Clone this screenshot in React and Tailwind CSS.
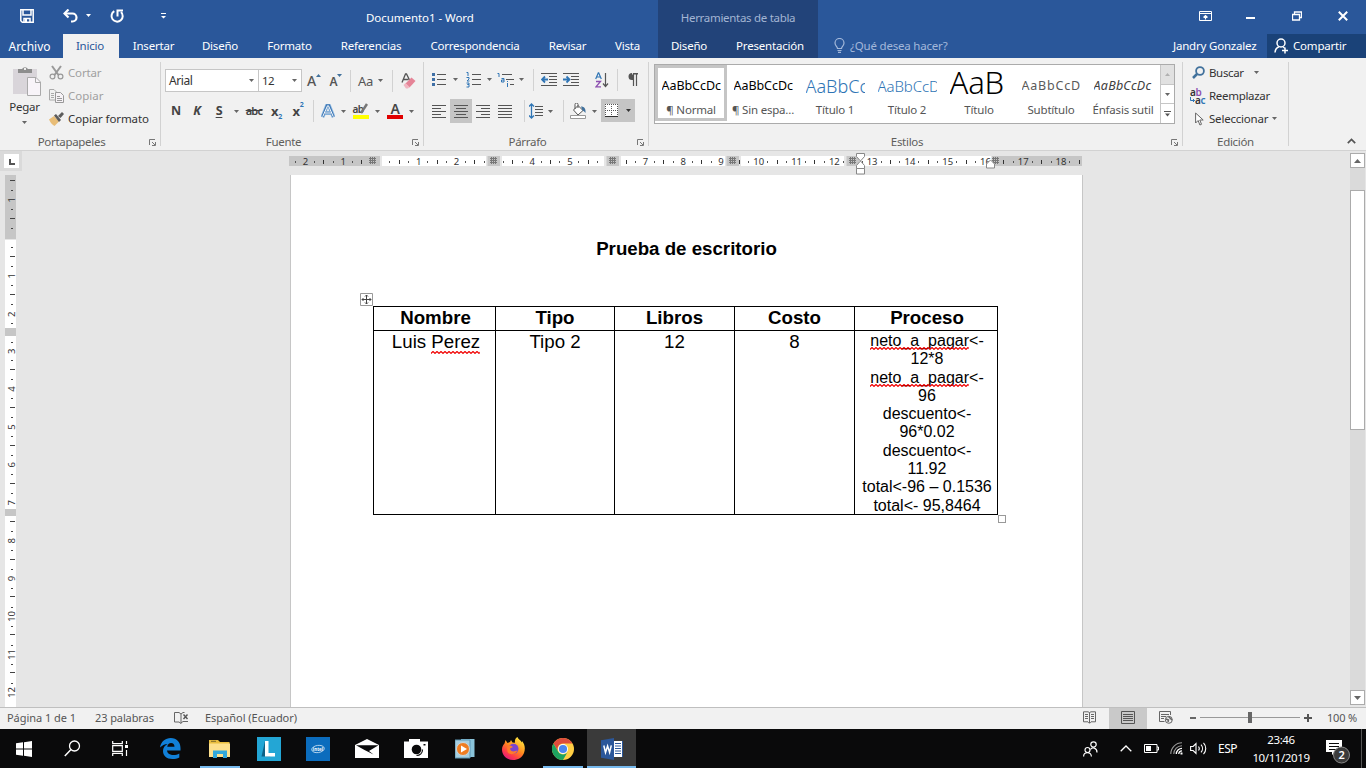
import React from "react";

/* ---------- helpers ---------- */

function Cell({ className = "", children }) {
  return <div className={"flex h-full shrink-0 items-center justify-center " + className}>{children}</div>;
}

function Svg({ w, h, children, className = "" }) {
  return (
    <svg width={w} height={h} viewBox={`0 0 ${w} ${h}`} fill="none" className={"shrink-0 " + className}>
      {children}
    </svg>
  );
}

function Caret({ color = "#666" }) {
  return (
    <Svg w={5} h={3}>
      <path d="M0 0h5L2.5 3z" fill={color} />
    </Svg>
  );
}

function Sep() {
  return <div className="h-[22px] w-px shrink-0 bg-[#d2d2d2]" />;
}

function Group({ className, label, launcher, children }) {
  return (
    <section className={"flex h-[92px] shrink-0 flex-col " + className}>
      <div className="flex h-[76px] flex-col">{children}</div>
      <div className="flex h-[16px] items-center tracking-[-0.3px] text-[#605e5c]">
        <span className="flex-1 text-center">{label}</span>
        {launcher && (
          <span className="flex w-[17px] items-center pl-[6px] pt-px">
            <Svg w={7} h={7}>
              <path d="M.5 6V.5H6M3 3l3 3M6.500 3v3.500H3" stroke="#777" />
            </Svg>
          </span>
        )}
      </div>
    </section>
  );
}

function GroupLine() {
  return <div className="mt-[4px] h-[84px] w-px shrink-0 bg-[#d2d2d2]" />;
}

function Lines({ rows, w = 15 }) {
  return (
    <Svg w={w} h={rows.length * 3 - 2}>
      {rows.map(([x, l], i) => (
        <rect key={i} x={x} y={i * 3} width={l} height="1" fill="#555" />
      ))}
    </Svg>
  );
}

/* ---------- title bar and tabs ---------- */

function Tab({ className, children }) {
  return <div className={"flex h-full shrink-0 items-center justify-center whitespace-nowrap " + className}>{children}</div>;
}

function Header() {
  return (
    <header className="flex h-[58px] shrink-0 bg-[#2a579a] text-white">
      <div className="flex w-[658px] flex-col">
        <div className="flex h-[34px] items-center">
          <Cell className="w-[54px] pb-[2px]">
            <Svg w={14} h={14}>
              <path d="M.8.8h12.400v12.400H2.300L.8 11.700zM3 1v5h8V1M4 13V9.500h6V13" stroke="#fff" strokeWidth="1.500" />
              <path d="M5 10h2v3H5z" fill="#fff" />
            </Svg>
          </Cell>
          <Cell className="w-[32px] pb-[3px]">
            <Svg w={15} h={14}>
              <path d="M2 4.500h7.500a4 4 0 0 1 0 8H8" stroke="#fff" strokeWidth="2.200" />
              <path d="M5.500.5L1.500 4.500l4 4" stroke="#fff" strokeWidth="2.200" />
            </Svg>
          </Cell>
          <Cell className="w-[5px] pb-[3px]"><Caret color="#fff" /></Cell>
          <Cell className="w-[51px] pb-[3px]">
            <Svg w={14} h={14}>
              <path d="M4.300 2.200A5.600 5.600 0 1 0 11 3" stroke="#fff" strokeWidth="2" />
              <path d="M7.500 7.500V1.500H13" stroke="#fff" strokeWidth="2" />
            </Svg>
          </Cell>
          <Cell className="w-[42px] pb-[2px]">
            <Svg w={5} h={6}>
              <path d="M0 0h5v1H0zM0 3h5L2.500 5.500z" fill="#fff" />
            </Svg>
          </Cell>
          <span className="w-[474px] whitespace-nowrap pl-[182px] pt-px tracking-[-0.05px]">Documento1 - Word</span>
        </div>
        <div className="flex h-[24px]">
          <Tab className="w-[63px] pr-[4px] pt-[2px] text-[12px] tracking-[0px]">Archivo</Tab>
          <Tab className="w-[56px] bg-[#f1f1f1] pr-[2px] text-[#2a579a]">Inicio</Tab>
          <Tab className="w-[69px]">Insertar</Tab>
          <Tab className="w-[64px]">Diseño</Tab>
          <Tab className="w-[75px]">Formato</Tab>
          <Tab className="w-[88px]">Referencias</Tab>
          <Tab className="w-[120px]">Correspondencia</Tab>
          <Tab className="w-[65px]">Revisar</Tab>
          <Tab className="w-[55px]">Vista</Tab>
        </div>
      </div>
      <div className="flex w-[160px] flex-col bg-[#224379]">
        <div className="flex h-[34px] items-center justify-center pt-px tracking-[-0.3px] text-[#a3b5d3]">Herramientas de tabla</div>
        <div className="flex h-[24px]">
          <Tab className="w-[62px]">Diseño</Tab>
          <Tab className="w-[98px] pl-[2px]">Presentación</Tab>
        </div>
      </div>
      <div className="flex flex-1 flex-col">
        <div className="flex h-[34px] items-center justify-end">
          <Cell className="w-[46px] pb-[2px]">
            <Svg w={13} h={10}>
              <path d="M.5.5h12v9H.5zM.5 2.500h12" stroke="#fff" />
              <path d="M6.500 8.500V5M4.500 6.500l2-2 2 2" stroke="#fff" strokeWidth="1.200" />
            </Svg>
          </Cell>
          <Cell className="w-[46px] pr-[2px] pt-[2px]"><div className="h-[2px] w-[9px] bg-white" /></Cell>
          <Cell className="w-[46px] pb-[2px]">
            <Svg w={10} h={10}>
              <path d="M2.500 3V1h7v5.500H7.500M.5 3.500h7v5.500H.5z" stroke="#fff" strokeWidth="1.300" />
            </Svg>
          </Cell>
          <Cell className="w-[46px] pb-[2px]">
            <Svg w={10} h={10}>
              <path d="M.8.8l8.400 8.400M9.200.8L.8 9.200" stroke="#fff" strokeWidth="2" />
            </Svg>
          </Cell>
        </div>
        <div className="flex h-[24px] items-center">
          <Cell className="w-[32px] pb-[2px] pl-[10px]">
            <Svg w={11} h={15}>
              <path d="M3.500 10.500c0-2-2.500-2.500-2.500-5.500a4.500 4.500 0 0 1 9 0c0 3-2.500 3.500-2.500 5.500zM3.500 12.500h4M4 14.300h3" stroke="#a3b8da" strokeWidth="1.200" />
            </Svg>
          </Cell>
          <span className="w-[323px] text-[#a3b8da]">¿Qué desea hacer?</span>
          <span className="w-[94px] whitespace-nowrap">Jandry Gonzalez</span>
          <div className="flex h-full flex-1 items-center bg-[#1a4278] pl-[7px]">
            <Svg w={15} h={16}>
              <circle cx="7" cy="5" r="4" stroke="#fff" strokeWidth="1.500" />
              <path d="M1 14.500c.3-3 2-5 4-5.700M9 9l1.500 1M11 9.500v6M8 12.500h6" stroke="#fff" strokeWidth="1.500" />
            </Svg>
            <span className="pl-[4px]">Compartir</span>
          </div>
        </div>
      </div>
    </header>
  );
}

/* ---------- ribbon groups ---------- */

function Clipboard() {
  return (
    <Group className="w-[160px]" label="Portapapeles" launcher>
      <div className="flex">
        <div className="flex w-[49px] flex-col items-center pt-[8px]">
          <Svg w={29} h={31} className="ml-[4px]">
            <path d="M1 3h24v25H1z" fill="#d9d5da" />
            <path d="M6 3h4a3.500 3.500 0 0 1 6 0h4v4H6z" fill="#8d8d8d" />
            <path d="M12 2h2v2h-2z" fill="#eee" />
            <path d="M15.500 11.500h8.500l4.500 4.500v13.500h-13z" fill="#f8f4f9" stroke="#aaa" />
            <path d="M23.500 11.500v5h5" stroke="#aaa" />
          </Svg>
          <span className="mt-px text-[11.5px] leading-[18px]">Pegar</span>
          <div className="pt-[5px]"><Caret /></div>
        </div>
        <div className="flex flex-col pt-[3px]">
          <div className="flex h-[23px] items-center gap-[4px] text-[#a0a0a0]">
            <Svg w={15} h={15}>
              <path d="M3 1l6.500 9M12 1L5.500 10" stroke="#999" strokeWidth="2" />
              <circle cx="3.500" cy="11.500" r="2.400" stroke="#999" strokeWidth="1.200" />
              <circle cx="11.500" cy="11.500" r="2.400" stroke="#999" strokeWidth="1.200" />
            </Svg>
            <span className="tracking-[-0.15px]">Cortar</span>
          </div>
          <div className="flex h-[23px] items-center gap-[4px] text-[#a0a0a0]">
            <Svg w={15} h={14}>
              <path d="M.5.5H5l2.500 2.500V11h-7zM2 4.500h3M2 6.500h3M2 8.500h3" stroke="#aaa" />
              <path d="M6.500 3.500h5l3 3v7h-8z" fill="#f6f2f6" stroke="#999" />
              <path d="M8 7.500h3M8 9.500h5M8 11.500h5" stroke="#999" />
            </Svg>
            <span className="tracking-[0px]">Copiar</span>
          </div>
          <div className="flex h-[23px] items-center gap-[4px]">
            <Svg w={15} h={14}>
              <path d="M0 7.500L5 4l5 5.500L5.500 14C3 12.500 1 10 0 7.500z" fill="#e8bd77" />
              <path d="M5 3.500L7 2l5 6-2 2zM9 4l4-4 2 2-3.500 4z" fill="#5c5c5c" />
            </Svg>
            <span className="whitespace-nowrap tracking-[-0.12px]">Copiar formato</span>
          </div>
        </div>
      </div>
    </Group>
  );
}

function FontGroup() {
  return (
    <Group className="w-[262px]" label="Fuente" launcher>
      <div className="mt-[11px] flex h-[23px] shrink-0 pl-[4px]">
        <div className="flex h-[23px] w-[94px] items-center justify-between border border-[#c6c6c6] bg-white pl-[2px] pr-[4px]">
          <span className="pl-px text-[12px] tracking-[-0.4px]">Arial</span><Caret />
        </div>
        <div className="-ml-px flex h-[23px] w-[44px] items-center justify-between border border-[#c6c6c6] bg-white pl-[3px] pr-[4px]">
          <span className="tracking-[-0.5px]">12</span><Caret />
        </div>
        <Cell className="w-[24px]">
          <span className="text-[14px] font-medium text-[#555]">A</span>
          <Svg w={5} h={14}><path d="M0 3h5L2.500 0z" fill="#41719c" /></Svg>
        </Cell>
        <Cell className="w-[20px]">
          <span className="pt-[2px] text-[12px] font-semibold text-[#555]">A</span>
          <Svg w={5} h={14}><path d="M0 0h5L2.500 3z" fill="#41719c" /></Svg>
        </Cell>
        <Cell className="w-[9px]"><Sep /></Cell>
        <Cell className="w-[21px]"><span className="text-[13px] text-[#555]">Aa</span></Cell>
        <Cell className="w-[9px]"><Caret /></Cell>
        <Cell className="w-[15px]"><Sep /></Cell>
        <Cell className="w-[17px]">
          <Svg w={15} h={16}>
            <path d="M1 9.500L4.500 1h1L9 8M2.300 6.500h5" stroke="#555" strokeWidth="1.300" />
            <path d="M4.500 10.500L10.500 4.500l4 3.500-6 6.500z" fill="#e58497" />
            <path d="M2.500 12l2-2 4 4-1.500 1.500H5z" fill="#f2b5c1" />
          </Svg>
        </Cell>
      </div>
      <div className="mt-[7px] flex h-[24px] shrink-0 pl-[4px] text-[#444]">
        <Cell className="w-[22px] text-[12.5px] font-bold">N</Cell>
        <Cell className="w-[20px] text-[12.5px] font-bold italic">K</Cell>
        <Cell className="w-[24px] text-[12.5px] font-bold underline underline-offset-2">S</Cell>
        <Cell className="w-[10px]"><Caret /></Cell>
        <Cell className="w-[26px] text-[11px] font-semibold line-through tracking-[-0.7px]">abc</Cell>
        <Cell className="w-[19px] text-[13px] font-bold">x<sub className="pt-[8px] text-[7px] text-[#2f75b5]">2</sub></Cell>
        <Cell className="w-[24px] text-[13px] font-bold">x<sup className="pb-[5px] text-[7px] text-[#2f75b5]">2</sup></Cell>
        <Cell className="w-[6px]"><Sep /></Cell>
        <Cell className="w-[24px]">
          <Svg w={14} h={14}>
            <path d="M1.500 13L6 1.500h2L12.500 13M4 9h6" stroke="#9dc3e6" strokeWidth="4" />
            <path d="M1.500 13L6 1.500h2L12.500 13M4 9h6" stroke="#3f78b5" strokeWidth="2.500" />
            <path d="M1.700 12.700L6.500 1.800h1L12.300 12.700M4 9h6" stroke="#fff" strokeWidth="1" />
          </Svg>
        </Cell>
        <Cell className="w-[7px]"><Caret /></Cell>
        <Cell className="w-[27px]">
          <div className="flex flex-col">
            <div className="flex h-[12px] w-[16px] items-center">
              <span className="text-[10px] font-semibold leading-[10px] tracking-[-0.6px]">ab</span>
              <Svg w={8} h={12} className="-ml-[3px]"><path d="M7 1L1 10" stroke="#777" strokeWidth="2.500" /></Svg>
            </div>
            <div className="h-[4px] w-[16px] bg-[#ffff00]" />
          </div>
        </Cell>
        <Cell className="w-[6px]"><Caret /></Cell>
        <Cell className="w-[30px]">
          <div className="flex flex-col items-center">
            <span className="h-[12px] text-[14px] font-semibold leading-[11px]">A</span>
            <div className="h-[4px] w-[16px] bg-[#e00000]" />
          </div>
        </Cell>
        <Cell className="w-[3px]"><Caret /></Cell>
      </div>
    </Group>
  );
}

function IndentIcon({ right }) {
  return (
    <Svg w={16} h={13}>
      <path d="M0 .5h16M8 3.500h8M8 6.500h8M8 9.500h8M0 12.500h16" stroke="#555" />
      {right ? (
        <path d="M0 6.500h6M3.500 3.500l3 3-3 3" stroke="#2f75b5" strokeWidth="1.800" />
      ) : (
        <path d="M1 6.500h6M4 3.500l-3 3 3 3" stroke="#2f75b5" strokeWidth="1.800" />
      )}
    </Svg>
  );
}

function Paragraph() {
  return (
    <Group className="w-[224px]" label="Párrafo" launcher>
      <div className="mt-[10px] flex h-[23px] shrink-0">
        <Cell className="w-[29px]">
          <Svg w={14} h={15}>
            <path d="M5 2.500h9M5 7.500h9M5 12.500h9" stroke="#555" />
            <path d="M0 1h3v3H0zM0 6h3v3H0zM0 11h3v3H0z" fill="#3f6fa5" />
          </Svg>
        </Cell>
        <Cell className="w-[5px]"><Caret /></Cell>
        <Cell className="w-[30px]">
          <Svg w={15} h={17}>
            <path d="M6 3.500h9M6 8.500h9M6 13.500h9" stroke="#555" />
            <path d="M.5 1.500H2V5M.5 6.500H3v1.500L1 10h2.500M.5 12H3v1.500H1.500 3V16H.5" stroke="#2f75b5" />
          </Svg>
        </Cell>
        <Cell className="w-[3px]"><Caret /></Cell>
        <Cell className="w-[29px]">
          <Svg w={17} h={16}>
            <path d="M5 2.500h10M9 7.500h8M13 12.500h4" stroke="#555" />
            <path d="M.5 1.500H2V5M4.500 6.500H7V10H4.500V8H7M10.500 11v4M10.500 9v1" stroke="#2f75b5" />
          </Svg>
        </Cell>
        <Cell className="w-[3px]"><Caret /></Cell>
        <Cell className="w-[21px]"><Sep /></Cell>
        <Cell className="w-[10px]"><IndentIcon /></Cell>
        <Cell className="w-[34px]"><IndentIcon right /></Cell>
        <Cell className="w-[28px]">
          <Svg w={14} h={16}>
            <path d="M.7 7L3.300.8h.4L6.300 7M1.500 5h4" stroke="#2f75b5" strokeWidth="1.200" />
            <path d="M1 9.500h4.500L1 14.800h5" stroke="#8c4fb0" strokeWidth="1.300" />
            <path d="M10.500 1v13M8 11.500l2.500 3 2.500-3" stroke="#555" strokeWidth="1.200" />
          </Svg>
        </Cell>
        <Cell className="w-[3px]"><Sep /></Cell>
        <Cell className="w-[28px]">
          <Svg w={10} h={13}>
            <path d="M4 0h6v1.500H4zM4 0a3.500 3.500 0 0 0 0 7h1V0z" fill="#555" />
            <path d="M5.500 0v13M8.500 0v13" stroke="#555" strokeWidth="1.200" />
          </Svg>
        </Cell>
      </div>
      <div className="mt-[8px] flex h-[24px] shrink-0">
        <Cell className="w-[26px] pl-[4px]"><Lines w={14} rows={[[0, 14], [0, 9], [0, 14], [0, 9], [0, 14]]} /></Cell>
        <Cell className="w-[22px] bg-[#c5c5c5]"><Lines w={14} rows={[[0, 14], [2, 10], [0, 14], [2, 10], [0, 14]]} /></Cell>
        <Cell className="w-[22px]"><Lines w={14} rows={[[0, 14], [5, 9], [0, 14], [5, 9], [0, 14]]} /></Cell>
        <Cell className="w-[22px]"><Lines w={14} rows={[[0, 14], [0, 14], [0, 14], [0, 14], [0, 14]]} /></Cell>
        <Cell className="w-[17px]"><Sep /></Cell>
        <Cell className="w-[6px]">
          <Svg w={14} h={16}>
            <path d="M6 3.500h8M6 6.500h8M6 9.500h8M6 12.500h8" stroke="#555" />
            <path d="M2.500 1v14M0 3.500L2.500 1 5 3.500M0 12.500L2.500 15 5 12.500" stroke="#2f75b5" strokeWidth="1.300" />
          </Svg>
        </Cell>
        <Cell className="w-[23px]"><Caret /></Cell>
        <Cell className="w-[2px]"><Sep /></Cell>
        <Cell className="w-[28px]">
          <Svg w={17} h={16}>
            <path d="M3.500 7L8 2.500l5 5-5 4.500zM8 5V1.500a1.500 1.500 0 0 0-3 0V6" fill="#fff" stroke="#555" />
            <path d="M11 3.500c3 0 5 2 4.500 6.500-1-1-1.500-2-3-2.500z" fill="#41719c" />
            <path d="M.5 12.500h15v3H.5z" fill="#fff" stroke="#999" />
          </Svg>
        </Cell>
        <Cell className="w-[5px]"><Caret /></Cell>
        <div className="ml-[4px] flex h-[23px] w-[34px] items-center justify-between bg-[#c5c5c5] pl-[4px] pr-[4px]">
          <Svg w={14} h={14}>
            <path d="M0 0h13v13H0z" fill="#fff" />
            <path d="M0 .5h13M0 6.500h13M.5 0v13M6.500 0v13M12.500 0v13" stroke="#555" strokeDasharray="1 1" />
            <path d="M0 12.500h13" stroke="#333" />
          </Svg>
          <Caret color="#333" />
        </div>
      </div>
    </Group>
  );
}

function Style({ preview, name, look, selected }) {
  return (
    <div className={"box-border flex h-[56px] w-[72px] shrink-0 flex-col items-center border-[3px] " + (selected ? "border-[#c5c5c5]" : "border-transparent")}>
      <div className="mt-[4px] flex h-[28px] w-[59px] items-center overflow-hidden">
        <span className={"whitespace-nowrap " + look}>{preview}</span>
      </div>
      <span className="mt-[2px] whitespace-nowrap leading-[16px] text-[#555]">{name}</span>
    </div>
  );
}

function Styles() {
  return (
    <Group className="w-[533px]" label="Estilos" launcher>
      <div className="ml-[5px] mt-[6px] flex h-[60px] w-[521px] shrink-0 border border-[#ababab] bg-white">
        <div className="flex w-[505px]">
          <Style selected preview="AaBbCcDc" name="¶ Normal" look="text-[12.5px] text-black tracking-[-0.05px]" />
          <Style preview="AaBbCcDc" name="¶ Sin espa..." look="text-[12.5px] text-black tracking-[-0.05px]" />
          <Style preview="AaBbCcDc" name="Título 1" look="text-[18px] font-light text-[#2e74b5] tracking-[0px]" />
          <Style preview="AaBbCcDc" name="Título 2" look="text-[15px] font-light text-[#2e74b5] tracking-[-0.1px]" />
          <Style preview="AaB" name="Título" look="pb-[9px] text-[31px] font-light leading-[30px] text-black tracking-[-0.2px]" />
          <Style preview="AaBbCcDc" name="Subtítulo" look="text-[12.5px] text-[#5a5a5a] tracking-[0.8px]" />
          <Style preview="AaBbCcDc" name="Énfasis sutil" look="text-[12.5px] italic text-[#404040] tracking-[0.25px]" />
        </div>
        <div className="flex flex-1 flex-col border-l border-[#c6c6c6]">
          <div className="flex flex-1 items-center justify-center bg-[#e1e1e1]"><Svg w={5} h={3}><path d="M0 3h5L2.500 0z" fill="#b0b0b0" /></Svg></div>
          <div className="flex flex-1 items-center justify-center border-y border-[#c6c6c6]"><Caret /></div>
          <div className="flex flex-1 items-center justify-center"><Svg w={7} h={6}><path d="M0 0h7v1H0zM1 2.500h5L3.500 5.500z" fill="#555" /></Svg></div>
        </div>
      </div>
    </Group>
  );
}

function Editing() {
  return (
    <Group className="w-[105px]" label="Edición">
      <div className="flex flex-col pl-[6px] pt-[3px]">
        <div className="flex h-[23px] items-center">
          <Cell className="w-[20px] pr-[2px]">
            <Svg w={13} h={13}>
              <circle cx="8" cy="5" r="3.900" stroke="#41719c" strokeWidth="1.800" />
              <path d="M5 8L1 12" stroke="#41719c" strokeWidth="2.500" />
            </Svg>
          </Cell>
          <span className="w-[45px] tracking-[-0.35px]">Buscar</span><Caret />
        </div>
        <div className="flex h-[23px] items-center">
          <div className="flex w-[20px] flex-col pl-px text-[10px] font-semibold leading-[8px] tracking-[-0.3px]">
            <span>a<span className="text-[#8c4fb0]">b</span></span>
            <span className="flex items-center">
              <Svg w={5} h={6}><path d="M.5 0v3.500h4M3 2l1.500 1.500L3 5" stroke="#2f75b5" /></Svg>
              a<span className="text-[#2f75b5]">c</span>
            </span>
          </div>
          <span className="tracking-[-0.3px]">Reemplazar</span>
        </div>
        <div className="flex h-[23px] items-center">
          <Cell className="w-[20px] pl-[1px]">
            <Svg w={9} h={14}>
              <path d="M.6 1v10l2.500-2.500 1.800 4.500 1.600-.7-1.700-4.300h3.400z" fill="#fff" stroke="#666" />
            </Svg>
          </Cell>
          <span className="w-[63px] tracking-[-0.2px]">Seleccionar</span><Caret />
        </div>
      </div>
    </Group>
  );
}

/* ---------- rulers ---------- */

const HASH = [372.5, 493.5, 612.5, 732.5, 852.5, 995.5];
const WHITE = [[382, 486], [502, 604], [621, 725], [741, 844], [860, 991]];
const HTICKS = Array.from({ length: 84 }, (_, i) => i - 9);

function HorizontalRuler() {
  return (
    <svg width="820" height="24" viewBox="285 151 820 24" className="shrink-0">
      <rect x="289" y="156" width="793" height="10" fill="#e6e6e6" />
      <rect x="289" y="156" width="91" height="10" fill="#c6c6c6" />
      <rect x="992" y="156" width="90" height="10" fill="#c6c6c6" />
      {WHITE.map(([a, b]) => <rect key={a} x={a} y="156" width={b - a} height="10" fill="#fff" />)}
      {HASH.slice(1, 5).map((x) => <rect key={x} x={x - 6} y="156" width="12.500" height="10" fill="#c6c6c6" />)}
      {HTICKS.map((i) => {
        const x = 381 + i * 9.445;
        if (i === 0 || x > 1081 || HASH.some((h) => Math.abs(h - x) < 6.500)) return null;
        if (i % 4 === 0) {
          return (
            <text key={i} x={x} y="164.700" textAnchor="middle" fontSize="9.500" letterSpacing="0" fontFamily="'Noto Sans', sans-serif" fill="#333">
              {Math.abs(i / 4)}
            </text>
          );
        }
        return i % 2 === 0
          ? <rect key={i} x={Math.round(x) - 1} y="160" width="1" height="4" fill="#333" />
          : <rect key={i} x={Math.round(x) - 1} y="161" width="1" height="2" fill="#555" />;
      })}
      {HASH.map((x) => (
        <path key={x} d={`M${x - 3.500} 158.500h7M${x - 3.500} 160.500h7M${x - 3.500} 162.500h7M${x - 2} 157v7M${x} 157v7M${x + 2} 157v7`} stroke="#777" strokeWidth="1" />
      ))}
      <path d="M856.500 153.500h8v3l-4 4.500 4 4.500v3h-8v-3l4-4.500-4-4.500z" fill="#fff" stroke="#888" />
      <path d="M856.500 168.500h8v5.500h-8z" fill="#fff" stroke="#888" />
      <path d="M986.500 168v-4l4-4 4 4v4z" fill="#fff" stroke="#888" />
    </svg>
  );
}

function VerticalRuler() {
  const numbers = [[200, 1], [276, 1], [314.5, 2], ...Array.from({ length: 10 }, (_, i) => [351.3 + i * 37.9, i + 3])];
  const ticks = [180.5, 218.5, 256.5, 294.500, ...Array.from({ length: 9 }, (_, i) => 369.500 + i * 37.9)];
  const dots = [190, 209, 228.500, 247.500, 266, 285.500, 304.500, 323.500, ...Array.from({ length: 19 }, (_, i) => 342 + i * 18.95)];
  return (
    <svg width="22" height="532" viewBox="0 175 22 532" className="shrink-0">
      <rect x="5" y="175" width="11" height="64" fill="#c6c6c6" />
      <rect x="5" y="240" width="11" height="467" fill="#fff" />
      {numbers.map(([y, n]) => (
        <text key={y} transform={`translate(15 ${y}) rotate(-90)`} textAnchor="middle" fontSize="9.500" fontFamily="'Noto Sans', sans-serif" fill="#333">{n}</text>
      ))}
      {ticks.map((y) => <rect key={y} x="10" y={Math.floor(y)} width="5" height="1" fill="#444" />)}
      {dots.map((y) => <rect key={y} x="11" y={Math.floor(y)} width="2" height="1" fill="#444" />)}
      <rect x="5" y="328" width="11" height="8" fill="#c6c6c6" />
      <rect x="5" y="509" width="11" height="7" fill="#c6c6c6" />
    </svg>
  );
}

/* ---------- document ---------- */

function Squiggle({ className = "", children }) {
  return (
    <span className={"relative inline-block " + className}>
      {children}
      <svg className="absolute bottom-0 left-0 h-[3px] w-full" preserveAspectRatio="none">
        <defs>
          <pattern id="wave" width="4" height="3" patternUnits="userSpaceOnUse">
            <path d="M-1 3.300L2 .5L5 3.300" fill="none" stroke="#f00000" strokeWidth="1.200" />
          </pattern>
        </defs>
        <rect width="100%" height="3" fill="url(#wave)" />
      </svg>
    </span>
  );
}

function Th({ className = "", children }) {
  return <div className={"h-[24px] border-l border-t border-black text-center font-bold leading-[22px] " + className}>{children}</div>;
}

function Td({ className = "", children }) {
  return <div className={"h-[185px] border-b border-l border-t border-black text-center leading-[22px] " + className}>{children}</div>;
}

function Page() {
  return (
    <div className="ml-[268px] flex w-[793px] flex-1 flex-col overflow-hidden border-x border-[#c6c6c6] bg-white font-['Liberation_Sans',Arial,sans-serif] text-[18.7px] tracking-normal text-black">
      <h1 className="mt-[63px] text-center font-bold leading-[22px]">Prueba de escritorio</h1>
      <div className="relative ml-[82px] mt-[46px] grid w-[625px] grid-cols-[122px_119px_120px_120px_144px]">
        <Th className="pl-[2px]">Nombre</Th>
        <Th>Tipo</Th>
        <Th>Libros</Th>
        <Th>Costo</Th>
        <Th className="border-r pl-[2px]">Proceso</Th>
        <Td className="pl-[3px]">Luis <Squiggle className="h-[23px]">Perez</Squiggle></Td>
        <Td>Tipo 2</Td>
        <Td>12</Td>
        <Td>8</Td>
        <div className="flex h-[185px] flex-col items-center whitespace-nowrap border border-black pl-[2px] pt-px text-[16px] leading-[18.3px]">
          <span><Squiggle className="h-[18.3px]">neto_a_pagar</Squiggle>&lt;-</span>
          <span>12*8</span>
          <span><Squiggle className="h-[18.3px]">neto_a_pagar</Squiggle>&lt;-</span>
          <span>96</span>
          <span>descuento&lt;-</span>
          <span>96*0.02</span>
          <span>descuento&lt;-</span>
          <span>11.92</span>
          <span>total&lt;-96 – 0.1536</span>
          <span>total&lt;- 95,8464</span>
        </div>
        <svg width="13" height="13" className="absolute -left-[13px] -top-[13px]">
          <path d="M.5.5h12v12H.5z" fill="#fff" stroke="#999" />
          <path d="M6.500 2v9M2 6.500h9M5 3.500l1.500-1.500L8 3.500M5 9.500L6.500 11 8 9.500M3.500 5L2 6.500 3.500 8M9.500 5L11 6.500 9.500 8" fill="none" stroke="#444" />
        </svg>
        <div className="absolute -bottom-[8px] -right-[8px] h-[8px] w-[8px] border border-[#999] bg-white" />
      </div>
    </div>
  );
}

function ScrollBar() {
  return (
    <div className="flex w-[17px] shrink-0 flex-col items-start py-[2px]">
      <div className="flex h-[15px] w-[15px] items-center justify-center border border-[#ababab] bg-white"><Svg w={7} h={4}><path d="M0 4h7L3.500 0z" fill="#666" /></Svg></div>
      <div className="flex w-[15px] flex-1 flex-col bg-[#dadada] pt-[22px]"><div className="h-[240px] border border-[#ababab] bg-white" /></div>
      <div className="flex h-[15px] w-[15px] items-center justify-center border border-[#ababab] bg-white"><Svg w={7} h={4}><path d="M0 0h7L3.500 4z" fill="#666" /></Svg></div>
    </div>
  );
}

/* ---------- status bar ---------- */

function StatusBar() {
  return (
    <div className="flex h-[22px] shrink-0 items-center border-t border-[#bfbfbf] bg-[#f1f1f1] text-[11px] text-[#555]">
      <span className="w-[95px] whitespace-nowrap pb-[2px] pl-[7px] tracking-[-0.05px]">Página 1 de 1</span>
      <span className="w-[79px] whitespace-nowrap pb-[2px] tracking-[-0.1px]">23 palabras</span>
      <Svg w={15} h={13} className="mb-[2px]">
        <path d="M.5 1.500h4.500l2 1.500v9.500l-2-1.500H.5zM7 3l2-1.500h1.500M7 12l2-1.500h5" stroke="#666" />
        <path d="M9.500 3.500l4 4.500M13.500 3.500l-4 4.500" stroke="#555" strokeWidth="1.400" />
      </Svg>
      <span className="ml-[16px] flex-1 pb-[2px] tracking-[-0.02px]">Español (Ecuador)</span>
      <Cell className="w-[38px] pb-[2px] pr-[2px]">
        <Svg w={13} h={13}>
          <path d="M6.500 1.500L5 .8H.5v10H5l1.500 1.500 1.500-1.500h4.500v-10H8zM6.500 1.500v10.500M2 3.500h3M2 5.500h3M2 7.500h3M8 3.500h3M8 5.500h3M8 7.500h3" stroke="#666" />
        </Svg>
      </Cell>
      <Cell className="w-[38px] bg-[#c9c9c9] pb-[2px]">
        <Svg w={14} h={13}>
          <path d="M.5.5h13v12H.5zM2 3.500h10M2 5.500h10M2 7.500h10M2 9.500h10" stroke="#555" />
        </Svg>
      </Cell>
      <Cell className="w-[38px] pb-[2px]">
        <Svg w={14} h={13}>
          <path d="M11.500 4V.5H.5v10h5M2 3.500h8M2 5.500h5M2 7.500h3" stroke="#666" />
          <circle cx="9.800" cy="8.800" r="3.500" fill="#f1f1f1" stroke="#666" />
          <path d="M7 8l2.500 1-.5 2M9.500 5.500L12 8l1 1" stroke="#666" strokeWidth="1.500" />
        </Svg>
      </Cell>
      <div className="mb-[2px] ml-[5px] h-[2px] w-[6px] bg-[#666]" />
      <div className="mb-[2px] ml-[4px] flex h-[11px] w-[100px] items-center justify-center">
        <div className="h-px flex-1 bg-[#999]" />
        <div className="h-[11px] w-[4px] bg-[#666]" />
        <div className="h-px flex-1 bg-[#999]" />
      </div>
      <Cell className="w-[16px] pb-[2px]"><Svg w={8} h={8}><path d="M4 0v8M0 4h8" stroke="#555" strokeWidth="2" /></Svg></Cell>
      <span className="w-[50px] whitespace-nowrap pb-[2px] pl-[11px] text-[11px]">100 %</span>
    </div>
  );
}

/* ---------- task bar ---------- */

function TaskItem({ open, active, children }) {
  return (
    <div className={"flex h-full w-[49px] shrink-0 flex-col items-center " + (active ? "bg-[#3a3a3a]" : "")}>
      <div className="flex flex-1 items-center pt-[2px]">{children}</div>
      <div className={"h-[2px] " + (active ? "w-full bg-[#76b9ed]" : open ? "w-[40px] bg-[#76b9ed]" : "")} />
    </div>
  );
}

function TaskBar() {
  return (
    <footer className="flex h-[39px] shrink-0 items-center bg-[#0a0a0b] text-white">
      <div className="-ml-px flex h-full">
        <TaskItem>
          <Svg w={16} h={16}><path d="M0 2.300L7 1.300v6.200H0zM8 1.200L16 0v7.500H8zM0 8.500h7v6.200l-7-1zM8 8.500h8V16l-8-1.200z" fill="#fff" /></Svg>
        </TaskItem>
        <TaskItem>
          <Svg w={17} h={17}><circle cx="10.500" cy="6" r="5" stroke="#fff" strokeWidth="1.300" /><path d="M7 9.500L.8 16" stroke="#fff" strokeWidth="1.500" /></Svg>
        </TaskItem>
        <TaskItem>
          <Svg w={17} h={15} className="mr-[2px]"><path d="M.7 0v2.700h9.600V0M.7 4.700h9.600v5.600H.7zM.7 15v-2.700h9.600V15M14.500 0v3M14.500 9v6" stroke="#fff" strokeWidth="1.200" /><path d="M13 4h3v3h-3z" fill="#fff" /></Svg>
        </TaskItem>
        <TaskItem>
          <Svg w={21} h={21}>
            <path d="M0 9.500C1 3.500 5.500 0 10.700 0 17 0 20.500 4.500 20.500 10v2.500H7c.3 3 3 4.500 6.500 4.500 2.200 0 4-.6 5.800-1.600v4.100c-2 1-4.300 1.500-7 1.500C6.500 21 3 17.500 3 13c0-3.300 1.800-5.700 4.700-7C4.500 6.200 2 7.500 0 9.500zM7.200 8.700h7.300c0-2.200-1.200-3.700-3.400-3.700S7.700 6.500 7.200 8.700z" fill="#1180d8" />
          </Svg>
        </TaskItem>
        <TaskItem open>
          <Svg w={22} h={18}>
            <path d="M0 0h9l2 2h9.500v15H0z" fill="#e9bd3f" />
            <path d="M0 3.500h21V17H0z" fill="#fde08d" />
            <path d="M4 18v-7.500h14V18h-4v-4H8v4z" fill="#31a8dc" />
            <path d="M2 1.300h5" stroke="#7c6a2b" />
          </Svg>
        </TaskItem>
        <TaskItem>
          <div className="flex h-[24px] w-[24px] items-center justify-center bg-[#23a6d5]">
            <Svg w={24} h={24}><path d="M8 4L4.500 19.500h9L8 15z" fill="#0f6186" /><path d="M8 4h3.500v12H18v3.500H8z" fill="#fff" /></Svg>
          </div>
        </TaskItem>
        <TaskItem>
          <div className="flex h-[24px] w-[24px] items-center justify-center bg-[#0b6cbd]">
            <Svg w={16} h={10}>
              <ellipse cx="8" cy="5" rx="6.300" ry="3.600" stroke="#cfe4f5" strokeWidth="0.800" transform="rotate(-8 8 5)" />
              <text x="8" y="6.600" textAnchor="middle" fontSize="4.500" letterSpacing="0" fontWeight="700" fontFamily="'Noto Sans', sans-serif" fill="#fff">intel</text>
            </Svg>
          </div>
        </TaskItem>
        <TaskItem>
          <Svg w={24} h={19}>
            <path d="M0 6L12 0l12 6v13H0z" fill="#fff" />
            <path d="M1 6.200h22.500L14 12l4.500 3.500L9.500 11z" fill="#0a0a0b" />
          </Svg>
        </TaskItem>
        <TaskItem>
          <Svg w={24} h={19}>
            <path d="M0 2.500h5V0h11v2.500h8V19H0z" fill="#fff" />
            <circle cx="12.500" cy="10.500" r="4.800" fill="#0a0a0b" />
            <path d="M18.500 10.500c0 3.500-2.500 6-6 6" stroke="#0a0a0b" strokeWidth="1.200" />
            <path d="M19.500 5h2v1.500h-2z" fill="#0a0a0b" />
          </Svg>
        </TaskItem>
        <TaskItem>
          <Svg w={20} h={20}>
            <path d="M6 0h13.500v18H6z" fill="#8ac3da" />
            <path d="M0 1h15v18H0z" fill="#a7cfe0" stroke="#5c97b5" />
            <circle cx="8" cy="10" r="6.500" fill="#ef7d22" stroke="#c9d8dd" />
            <path d="M6 6.500v7l6-3.500z" fill="#fff" />
          </Svg>
        </TaskItem>
        <TaskItem>
          <Svg w={23} h={23}>
            <defs>
              <linearGradient id="fox" x1="18" y1="2" x2="5" y2="22" gradientUnits="userSpaceOnUse"><stop stopColor="#ffe03c" /><stop offset=".45" stopColor="#ff8a1e" /><stop offset=".75" stopColor="#ff3f45" /><stop offset="1" stopColor="#e21b7c" /></linearGradient>
            </defs>
            <path d="M3.500 3l2 3L8 5l1-2 1.500 2.500 2.500.2C12.500 3 13.500 1 15.500 0c.2 2 3 3 4.500 5.500V4c3 3.500 3.500 8 2 12-1.700 4.500-6 7-11 7C5 23 0 18.500 0 12.500c0-2.500 1-4.500 2.500-6z" fill="url(#fox)" />
            <circle cx="11.500" cy="11.800" r="5" fill="#7c44cf" />
            <path d="M5 10c2-2 4-2 6 0l-3 1.500c.5 3 4 4 7.500 1.500-1 4-7 6-10 2z" fill="#ff7b2a" />
          </Svg>
        </TaskItem>
        <TaskItem open>
          <Svg w={22} h={22}>
            <circle cx="11" cy="11" r="11" fill="#ffce44" />
            <path d="M1.470 5.500A11 11 0 0 1 20.530 5.500H11a5.500 5.500 0 0 0-4.760 8.250z" fill="#de4c3c" />
            <path d="M1.470 5.500A11 11 0 0 0 11 22l4.760-8.250a5.500 5.500 0 0 1-9.520 0z" fill="#1da260" />
            <circle cx="11" cy="11" r="5" fill="#fff" />
            <circle cx="11" cy="11" r="4.100" fill="#4a86ef" />
          </Svg>
        </TaskItem>
        <TaskItem active>
          <Svg w={22} h={22}>
            <path d="M10 3h12v16H10z" fill="#fff" />
            <path d="M14 5.500h6M14 8h6M14 10.500h6M14 13h6M14 15.500h6" stroke="#2b579a" />
            <path d="M21.500 3v16" stroke="#2b579a" />
            <path d="M0 2.300L13 0v22L0 19.700z" fill="#2b579a" />
            <path d="M2.800 7.500l1.700 7L6.600 8l2 6.500 1.700-7.200" stroke="#fff" strokeWidth="1.500" />
          </Svg>
        </TaskItem>
      </div>
      <div className="flex h-full flex-1 items-center justify-end">
        <Cell className="w-[36px]">
          <Svg w={15} h={16}>
            <circle cx="10.500" cy="3.500" r="2.700" stroke="#fff" strokeWidth="1.200" />
            <circle cx="4.500" cy="9" r="2.500" stroke="#fff" strokeWidth="1.200" />
            <path d="M.6 15.500c0-5 7.500-5 7.800 0M7.500 8.500c1.500-2.500 6.500-2 6.500 3" stroke="#fff" strokeWidth="1.200" />
          </Svg>
        </Cell>
        <Cell className="w-[36px]"><Svg w={12} h={7}><path d="M.7 6.300L6 1l5.300 5.300" stroke="#fff" strokeWidth="1.300" /></Svg></Cell>
        <Cell className="w-[14px]"><Svg w={15} h={9}><path d="M.5.5h12.500v8H.5zM13 3h1.500v3H13" stroke="#fff" /><path d="M2 2h5v5H2z" fill="#fff" /></Svg></Cell>
        <Cell className="w-[37px]">
          <Svg w={13} h={13}>
            <path d="M.8 12A11.200 11.200 0 0 1 12 .8M3.800 12A8.200 8.200 0 0 1 12 3.800" stroke="#999" strokeWidth="1.100" />
            <path d="M6.300 12A5.700 5.700 0 0 1 12 6.300M8.800 12A3.200 3.200 0 0 1 12 8.800" stroke="#fff" strokeWidth="1.300" />
            <path d="M10.500 12.500v-2h2v2z" fill="#fff" />
          </Svg>
        </Cell>
        <Cell className="w-[6px]">
          <Svg w={17} h={13}>
            <path d="M.6 4.500h2.500L6 1.500v10L3.100 8.500H.6z" stroke="#fff" strokeWidth="1.100" />
            <path d="M8.500 4.500c1 1.200 1 2.800 0 4M11 2.700c2 2.200 2 5.400 0 7.600M13.500.8c3 3.200 3 8.200 0 11.400" stroke="#fff" strokeWidth="1.100" />
          </Svg>
        </Cell>
        <Cell className="w-[53px] text-[12px] tracking-[-0.5px]"><span>ESP</span></Cell>
        <div className="flex w-[54px] flex-col items-center whitespace-nowrap text-[11.5px] leading-[18px] tracking-[-0.4px]">
          <span>23:46</span>
          <span>10/11/2019</span>
        </div>
        <Cell className="w-[53px] pl-[6px] pt-[6px]">
          <Svg w={24} h={26}>
            <path d="M0 1h16v12H9l-3 3v-3H0z" fill="#fff" />
            <path d="M3 4.500h10M3 7.500h10M3 10.500h7" stroke="#0a0a0b" />
            <circle cx="15.500" cy="16" r="8" fill="#3b3b3b" stroke="#888" />
            <text x="15.500" y="20" textAnchor="middle" fontSize="11" fontWeight="600" fontFamily="'Noto Sans', sans-serif" fill="#fff">2</text>
          </Svg>
        </Cell>
        <div className="mr-[4px] h-full w-px bg-[#555]" />
      </div>
    </footer>
  );
}

export default function App() {
  return (
    <div className="flex h-[768px] w-[1366px] flex-col overflow-hidden bg-[#e6e6e6] font-['Noto_Sans','Open_Sans',sans-serif] text-[11.5px] leading-[16px] tracking-[-0.2px] text-[#333]">
      <Header />
      <div className="flex h-[93px] shrink-0 border-b border-[#d2d2d2] bg-[#f1f1f1]">
        <Clipboard /><GroupLine />
        <FontGroup /><GroupLine />
        <Paragraph /><GroupLine />
        <Styles /><GroupLine />
        <Editing /><GroupLine />
        <div className="flex flex-1 items-end justify-end pb-[6px] pr-[10px]">
          <Svg w={9} h={6}><path d="M.8 5.200L4.500 1.500l3.700 3.700" stroke="#555" strokeWidth="1.700" /></Svg>
        </div>
      </div>
      <main className="flex h-[556px] shrink-0">
        <div className="flex w-[22px] shrink-0 flex-col">
          <div className="mb-[4px] flex h-[20px] items-center bg-[#dadada] pl-[4px]">
            <div className="flex h-[14px] w-[15px] items-center justify-center bg-white pl-px pt-[2px]">
              <div className="h-[6px] w-[6px] border-b-2 border-l-2 border-[#555]" />
            </div>
          </div>
          <VerticalRuler />
        </div>
        <div className="flex w-[1328px] shrink-0 flex-col">
          <div className="flex h-[24px] pl-[263px]"><HorizontalRuler /></div>
          <Page />
        </div>
        <ScrollBar />
      </main>
      <StatusBar />
      <TaskBar />
    </div>
  );
}
